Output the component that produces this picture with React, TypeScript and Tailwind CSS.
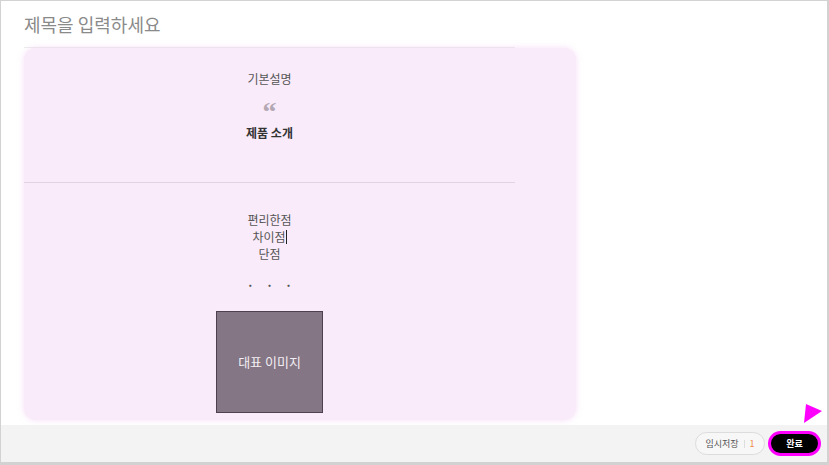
import React from 'react';

const font = { fontFamily: '"Noto Sans CJK KR", "Noto Sans", sans-serif' };

const ArrowMarker: React.FC = () => (
  <svg className="absolute left-[801px] top-[401px]" width="24" height="24" viewBox="0 0 24 24">
    <polygon points="4,2 20,9 2,21" fill="#ff00ff" />
  </svg>
);

export default function App() {
  return (
    <div
      className="relative w-[829px] h-[465px] flex flex-col bg-white border-l border-t border-r-2 border-b-[3px] border-[#d2d2d2] overflow-hidden"
      style={font}
    >
      <div className="flex-1 pl-[23px]">
        <div className="w-[491px] h-[47px] flex items-center border-b border-[#ececec] text-[18px] text-[#8a8a8a]">
          제목을 입력하세요
        </div>
        <div className="w-[552px] h-[372px] bg-[#f9ebf9] rounded-[12px] shadow-[0_0_6px_rgba(240,200,240,0.6)] flex flex-col">
          <div className="w-[491px] h-[135px] border-b border-[#e2d2e2] flex flex-col items-center pt-[23px] text-[12px]">
            <div className="leading-[16px] text-[#555]">기본설명</div>
            <div
              className="mt-[10px] h-[20px] leading-[30px] text-[28px] font-bold text-[#b4a8b4]"
              style={{ fontFamily: '"Liberation Serif", serif' }}
            >
              “
            </div>
            <div className="mt-[8px] leading-[16px] font-bold text-[#333]">제품 소개</div>
          </div>
          <div className="w-[491px] flex flex-col items-center pt-[28px] text-[12px] text-[#555]">
            <div className="leading-[17px]">편리한점</div>
            <div className="leading-[17px] flex items-center">
              차이점<span className="inline-block w-px h-[14px] bg-[#222]" />
            </div>
            <div className="leading-[17px]">단점</div>
            <div className="mt-[15px] flex gap-[12px] text-[#555] font-bold leading-[16px]">
              <span>·</span>
              <span>·</span>
              <span>·</span>
            </div>
            <div className="mt-[18px] w-[107px] h-[102px] bg-[#847684] border border-[#4f404f] flex items-center justify-center text-[13px] text-[#f3eef3]">
              대표 이미지
            </div>
          </div>
        </div>
      </div>
      <div className="h-[37px] bg-[#f3f3f3] flex items-center justify-end gap-[3px] pr-[6px]">
        <div className="h-[23px] w-[70px] rounded-full border border-[#dcdcdc] bg-[#f7f7f7] flex items-center justify-center gap-[5px] text-[9px] text-[#555]">
          <span>임시저장</span>
          <span className="w-px h-[8px] bg-[#ddd]" />
          <span className="text-[#f08a4b]">1</span>
        </div>
        <div className="h-[25px] w-[53px] rounded-full bg-black border-[3px] border-[#ff00ff] flex items-center justify-center text-[9px] font-bold text-white">
          완료
        </div>
      </div>
      <ArrowMarker />
    </div>
  );
}
